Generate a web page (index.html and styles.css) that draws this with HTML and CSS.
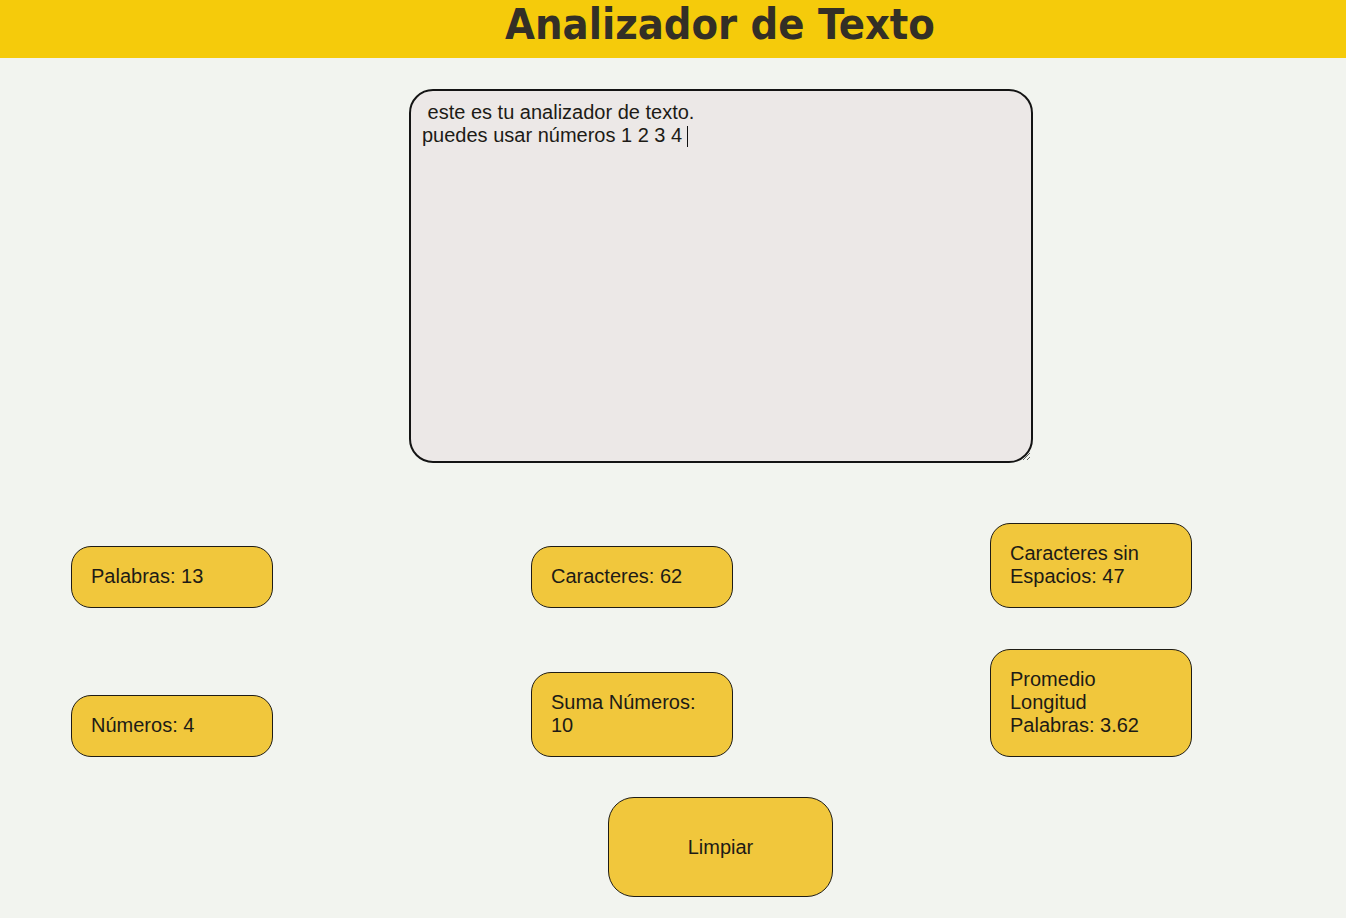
FILE: index.html
```html
<!DOCTYPE html>
<html lang="es">
<head>
<meta charset="utf-8">
<title>Analizador de Texto</title>
<link rel="stylesheet" href="styles.css">
</head>
<body>
<header class="topbar">
  <h1 class="title">Analizador de Texto</h1>
</header>
<main class="main">
  <div class="editor">
    <textarea class="text-input" spellcheck="false"> este es tu analizador de texto.
puedes usar números 1 2 3 4 </textarea>
    <span class="caret"></span>
  </div>
  <section class="stats">
    <div class="stat">Palabras: 13</div>
    <div class="stat">Caracteres: 62</div>
    <div class="stat">Caracteres sin Espacios: 47</div>
    <div class="stat">Números: 4</div>
    <div class="stat">Suma Números: 10</div>
    <div class="stat">Promedio Longitud Palabras: 3.62</div>
  </section>
  <div class="actions">
    <button class="clear-btn" type="button">Limpiar</button>
  </div>
</main>
</body>
</html>
```
FILE: styles.css
```css
* { box-sizing: border-box; }
html, body { margin: 0; padding: 0; }
body {
  background: #f2f4ef;
  font-family: "Liberation Sans", Arial, sans-serif;
  color: #1d1b16;
  width: 1346px;
  height: 918px;
  overflow: hidden;
}
.topbar {
  background: #f5cb0b;
  height: 58px;
  padding-left: 94px;
  display: flex;
  justify-content: center;
  align-items: flex-start;
}
.title {
  margin: 0;
  font-family: "DejaVu Sans Condensed", "DejaVu Sans", sans-serif;
  font-weight: 600;
  font-size: 43px;
  line-height: 48px;
  color: #332f26;
}
.main {
  display: flex;
  flex-direction: column;
}
.editor {
  position: relative;
  margin: 31px 0 0 409px;
  width: 624px;
  height: 374px;
}
.text-input {
  width: 624px;
  height: 374px;
  border: 2px solid #141414;
  border-radius: 24px;
  background: #ece8e7;
  font-family: "Liberation Sans", Arial, sans-serif;
  font-size: 20px;
  line-height: 23px;
  color: #1d1b16;
  padding: 10px 11px 8px;
  outline: none;
  display: block;
}
.caret {
  position: absolute;
  left: 278px;
  top: 37px;
  width: 1px;
  height: 21px;
  background: #111;
}
.stats {
  display: grid;
  grid-template-columns: 460px 459px 202px;
  grid-template-rows: 85px 109px;
  row-gap: 40px;
  align-items: end;
  margin: 60px 0 0 71px;
}
.stat {
  width: 202px;
  padding: 18px 19px 19px;
  border: 1px solid #1f1c15;
  border-radius: 20px;
  background: #f1c73c;
  font-size: 20px;
  line-height: 23px;
  color: #1d1b16;
}
.actions {
  margin: 40px 0 0 608px;
}
.clear-btn {
  width: 225px;
  height: 100px;
  border: 1px solid #1f1c15;
  border-radius: 26px;
  background: #f1c73c;
  font-family: "Liberation Sans", Arial, sans-serif;
  font-size: 20px;
  color: #1d1b16;
  padding: 0;
}
```
